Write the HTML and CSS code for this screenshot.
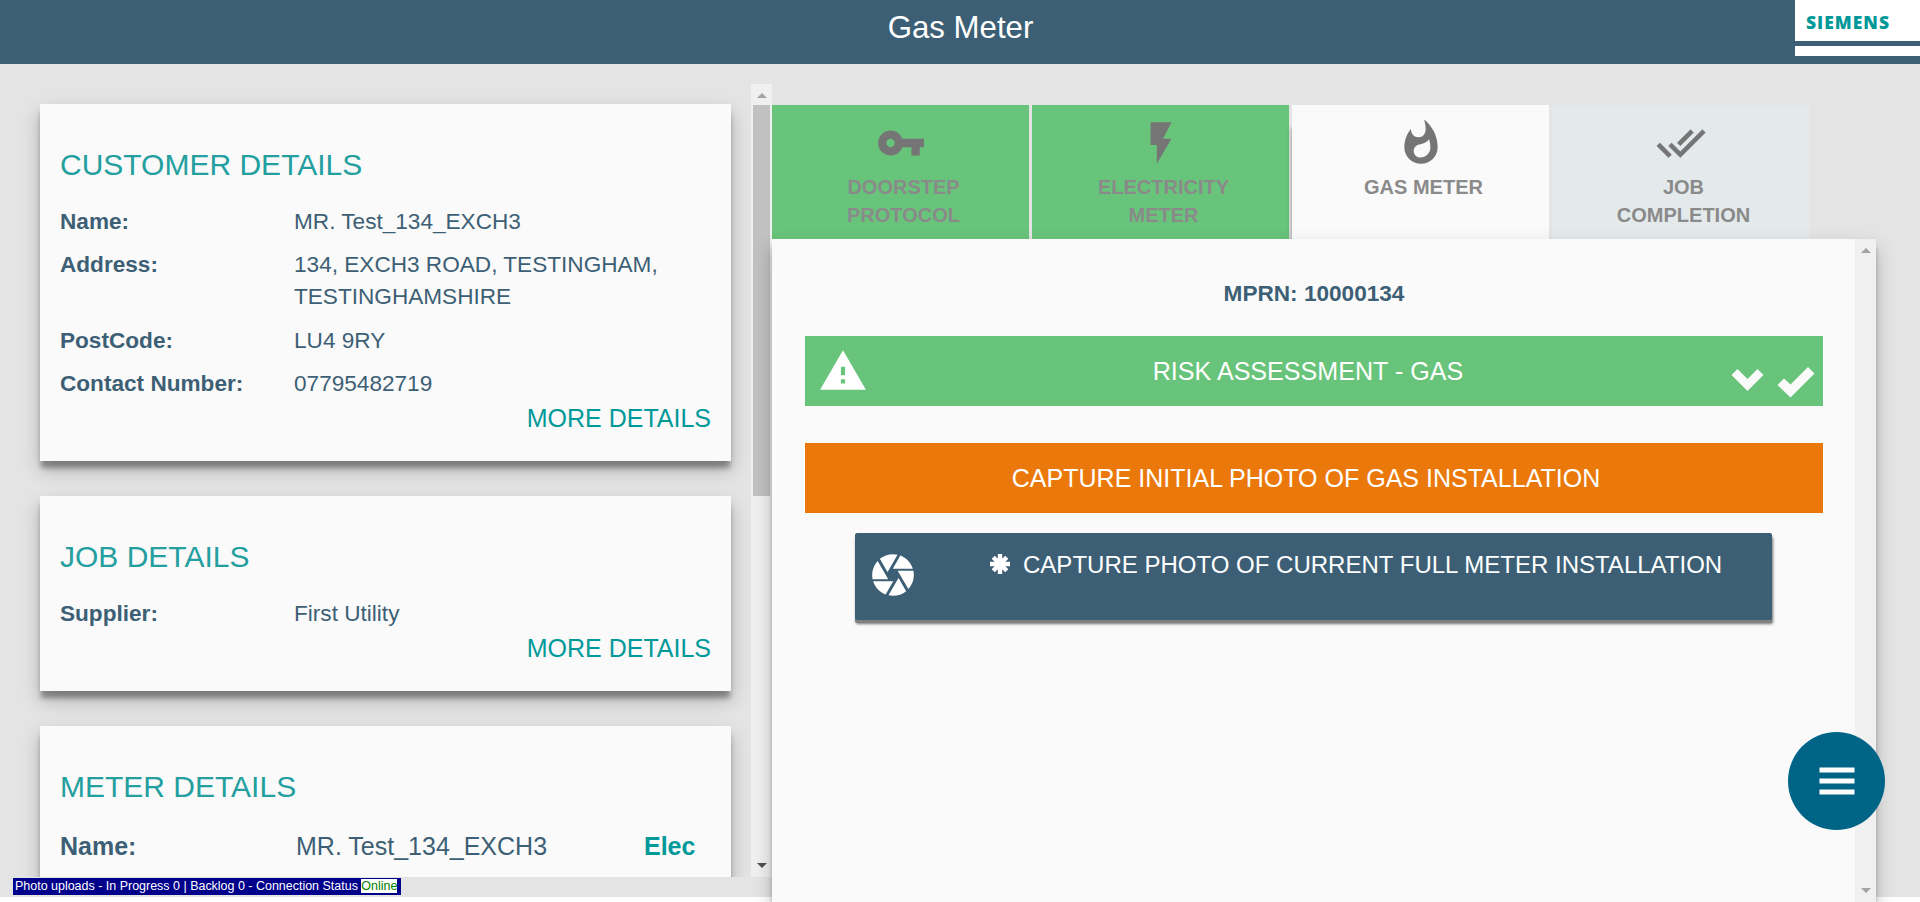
FILE: index.html
```html
<!DOCTYPE html>
<html lang="en">
<head>
<meta charset="utf-8">
<title>Gas Meter</title>
<link rel="stylesheet" href="styles.css">
</head>
<body>
<div class="app">
  <header class="header">
    <h1 class="title">Gas Meter</h1>
    <div class="brand"><div class="brand-name">SIEMENS</div><div class="brand-stripe"></div></div>
  </header>
  <main class="main">
    <div class="side">
      <div class="side-scroll">
        <div class="cards">
          <section class="card">
            <h2 class="card-title">CUSTOMER DETAILS</h2>
            <dl class="rows">
              <dt>Name:</dt><dd>MR. Test_134_EXCH3</dd>
              <dt>Address:</dt><dd>134, EXCH3 ROAD, TESTINGHAM, TESTINGHAMSHIRE</dd>
              <dt>PostCode:</dt><dd>LU4 9RY</dd>
              <dt>Contact Number:</dt><dd>07795482719</dd>
            </dl>
            <a class="more">MORE DETAILS</a>
          </section>
          <section class="card">
            <h2 class="card-title">JOB DETAILS</h2>
            <dl class="rows"><dt>Supplier:</dt><dd>First Utility</dd></dl>
            <a class="more">MORE DETAILS</a>
          </section>
          <section class="card">
            <h2 class="card-title">METER DETAILS</h2>
            <div class="meter-row"><b>Name:</b><span>MR. Test_134_EXCH3</span><b class="elec">Elec</b></div>
          </section>
        </div>
        <div class="scrollbar">
          <span class="arrow up"></span>
          <span class="thumb"></span>
          <span class="arrow down dark"></span>
        </div>
      </div>
      <div class="status">Photo uploads - In Progress 0 | Backlog 0 - Connection Status <span class="online">Online</span></div>
    </div>
    <div class="work">
      <nav class="tabs">
        <div class="tab done">
          <svg class="tab-icon" viewBox="0 0 24 24"><path d="M12.65 10C11.83 7.67 9.61 6 7 6c-3.31 0-6 2.69-6 6s2.69 6 6 6c2.61 0 4.83-1.67 5.65-4H17v4h4v-4h2v-4H12.65zM7 14c-1.1 0-2-.9-2-2s.9-2 2-2 2 .9 2 2-.9 2-2 2z"/></svg>
          <span class="tab-label">DOORSTEP<br>PROTOCOL</span>
        </div>
        <div class="tab done">
          <svg class="tab-icon" viewBox="0 0 24 24"><path d="M7 2v11h3v9l7-12h-4l4-8z"/></svg>
          <span class="tab-label">ELECTRICITY<br>METER</span>
        </div>
        <div class="tab active">
          <svg class="tab-icon" viewBox="0 0 24 24"><path d="M13.5.67s.74 2.65.74 4.8c0 2.06-1.35 3.73-3.41 3.73-2.07 0-3.63-1.67-3.63-3.73l.03-.36C5.21 7.51 4 10.62 4 14c0 4.42 3.58 8 8 8s8-3.58 8-8C20 8.61 17.41 3.8 13.5.67zM11.71 19c-1.78 0-3.22-1.4-3.22-3.14 0-1.62 1.05-2.76 2.81-3.12 1.77-.36 3.6-1.21 4.62-2.58.39 1.29.59 2.65.59 4.04 0 2.65-2.15 4.8-4.8 4.8z"/></svg>
          <span class="tab-label">GAS METER</span>
        </div>
        <div class="tab">
          <svg class="tab-icon ticks" viewBox="0 0 24 24"><path d="M18 7l-1.41-1.41-6.34 6.34 1.41 1.41L18 7zm4.24-1.41L11.66 16.17 7.48 12l-1.41 1.41L11.66 19l12-12-1.42-1.41zM.41 13.41L6 19l1.41-1.41L1.83 12 .41 13.41z"/></svg>
          <span class="tab-label">JOB<br>COMPLETION</span>
        </div>
      </nav>
      <div class="panel">
        <div class="panel-body">
          <div class="mprn">MPRN: 10000134</div>
          <div class="bar risk">
            <svg class="warn" viewBox="0 0 24 24"><path d="M1 21h22L12 2 1 21zm12-3h-2v-2h2v2zm0-4h-2v-4h2v4z"/></svg>
            <span class="bar-text">RISK ASSESSMENT - GAS</span>
            <svg class="marks" viewBox="0 0 84 32"><path d="M0.500 8l6-6 10 10 10-10 6 6-16 16z"/><path d="M46.500 18l6.500-6.500 6.500 6L77 0l6.500 6.500-24 24z"/></svg>
          </div>
          <div class="bar photo"><span class="bar-text">CAPTURE INITIAL PHOTO OF GAS INSTALLATION</span></div>
          <div class="task">
            <svg class="aperture" viewBox="0 0 24 24"><path d="M9.400 10.500l4.770-8.260C13.470 2.090 12.750 2 12 2c-2.400 0-4.600.85-6.320 2.250l3.660 6.350.06-.1zM21.540 9c-.92-2.920-3.150-5.260-6-6.340L11.880 9h9.660zm.26 1h-7.490l.29.500 4.760 8.250C21 16.970 22 14.610 22 12c0-.69-.07-1.350-.2-2zM8.540 12l-3.900-6.750C3.010 7.030 2 9.390 2 12c0 .69.07 1.350.2 2h7.490l-1.150-2zm-6.080 3c.92 2.920 3.150 5.260 6 6.340L12.120 15H2.460zm11.270 0l-3.900 6.760c.7.150 1.420.24 2.170.24 2.400 0 4.600-.85 6.320-2.250l-3.660-6.350-.93 1.600z"/></svg>
            <div class="task-text">
              <svg class="star" viewBox="0 0 20 20"><path d="M10 0v20M0 10h20M3.200 3.200l13.600 13.600M16.800 3.200L3.200 16.800"/></svg>
              <span>CAPTURE PHOTO OF CURRENT FULL METER INSTALLATION</span>
            </div>
          </div>
        </div>
        <div class="scrollbar">
          <span class="arrow up"></span>
          <span class="arrow down"></span>
        </div>
      </div>
    </div>
  </main>
</div>
<div class="fab"><svg viewBox="0 0 36 28"><path d="M.5.500h35v5h-35zM.5 11.500h35v5h-35zM.5 22.500h35v5h-35z"/></svg></div>
</body>
</html>
```
FILE: styles.css
```css
* { box-sizing: border-box; }
body {
  margin: 0;
  height: 902px;
  overflow: hidden;
  background: #fff;
  color: #3d5f75;
  font-family: "Liberation Sans", Arial, sans-serif;
}
h1, h2, dl, dt, dd { margin: 0; }
.app { display: flex; flex-direction: column; height: 897px; background: #e4e4e4; }

/* header */
.header {
  display: grid;
  grid-template-columns: 125px 1fr 125px;
  flex: none;
  height: 64px;
  background: #3d5f75;
}
.title {
  grid-column: 2;
  padding-left: 1px;
  font-size: 31.2px;
  font-weight: 400;
  line-height: 56px;
  text-align: center;
  color: #fff;
}
.brand { height: 56px; background: #fff; }
.brand-name {
  height: 41px;
  padding-left: 11px;
  font: 800 17.5px/44px "Open Sans", sans-serif;
  letter-spacing: 1px;
  color: #099;
}
.brand-stripe { height: 5px; background: #3d5f75; }

/* left column */
.main { display: flex; height: 833px; }
.side { width: 772px; padding-top: 20px; }
.side-scroll { display: flex; height: 793px; overflow: hidden; }
.cards { width: 751px; padding: 20px 20px 0 40px; }
.card {
  height: 357px;
  margin-bottom: 35px;
  padding: 40px 20px 0;
  background: #fafafa;
  box-shadow: 0 8px 5px -1px rgba(0, 0, 0, .33), 0 9px 18px rgba(0, 0, 0, .23);
}
.card:nth-child(2) { height: 195px; }
.card-title { font-size: 30px; font-weight: 400; line-height: 42px; color: #239f9f; }
.rows {
  display: grid;
  grid-template-columns: 234px 1fr;
  row-gap: 11.6px;
  margin-top: 20px;
  font-size: 22.6px;
  line-height: 31.8px;
}
dt { font-weight: 700; }
.more { display: block; margin-top: 1px; font-size: 25px; line-height: 35px; text-align: right; color: #099; }
.meter-row {
  display: grid;
  grid-template-columns: 236px 348px 1fr;
  margin-top: 21px;
  font-size: 25px;
  line-height: 35px;
}
.elec { color: #099; }
.status {
  width: 388px;
  height: 17px;
  margin: 1px 0 0 13px;
  padding-left: 2px;
  background: #00008b;
  font-size: 12.48px;
  line-height: 15px;
  white-space: nowrap;
  color: #fff;
}
.online { display: inline-block; margin-top: 1px; height: 14px; line-height: 14px; background: #fff; color: green; }

/* scrollbars */
.scrollbar {
  display: flex;
  flex-direction: column;
  flex: none;
  align-items: center;
  width: 21px;
  background: #f0f0f0;
}
.arrow { border: 5px solid transparent; }
.up { margin-top: 4px; border-bottom-color: #a3a3a3; }
.down { margin: auto 0 4px; border-top-color: #a3a3a3; }
.dark { border-top-color: #505050; }
.thumb { width: 17px; height: 391px; margin-top: 7px; background: #c1c1c1; }

/* right column */
.work { width: 1104px; padding-top: 41px; }
.tabs { display: flex; gap: 3px; height: 134px; }
.tab {
  display: flex;
  flex-direction: column;
  align-items: center;
  width: 257px;
  padding-top: 13px;
  background: #e4eaec;
  color: #8a8a8a;
}
.done { background: #68c47a; }
.active { background: #fafafa; box-shadow: -3px 21px 4px -2px rgba(0, 0, 0, .28); }
.tab-icon { width: 50px; height: 50px; fill: #757575; }
.ticks { stroke: #757575; stroke-width: .3; }
.tab-label { margin-top: 5px; padding-left: 6px; font-size: 20px; font-weight: 700; line-height: 28px; text-align: center; }
.panel {
  position: relative;
  display: flex;
  height: 663px;
  background: #fafafa;
  box-shadow: 0 8px 5px -1px rgba(0, 0, 0, .33), 0 9px 18px rgba(0, 0, 0, .23);
}
.panel-body { width: 1083px; padding: 39px 32px 0 33px; }
.mprn { font-size: 22.6px; font-weight: 700; line-height: 32px; text-align: center; }
.bar {
  display: grid;
  grid-template-columns: 88px 1fr 100px;
  align-items: start;
  height: 70px;
  line-height: 70px;
  font-size: 25.1px;
  text-align: center;
  color: #fff;
}
.bar-text { grid-column: 2; }
.risk { margin-top: 26px; background: #68c47a; }
.photo { margin-top: 37px; background: #eb780a; grid-template-columns: 84px 1fr 100px; font-size: 25.03px; }
.warn { width: 50px; height: 50px; margin: 10px 0 0 13px; fill: #fff; }
.marks { width: 84px; height: 32px; margin: 31px 0 0 8px; fill: #fafafa; }
.task {
  display: flex;
  width: 917px;
  height: 87px;
  margin: 20px 0 0 50px;
  border-radius: 2px;
  background: #3d5f75;
  color: #fff;
  box-shadow: 0 3px 0 #808080, 1px 4px 3px rgba(0, 0, 0, .55);
}
.aperture { width: 50px; height: 50px; margin: 17px 0 0 13px; fill: #fff; }
.task-text { display: flex; gap: 13px; margin-left: 72px; padding-top: 15px; font-size: 24.03px; line-height: 34px; white-space: nowrap; }
.star { width: 20px; height: 20px; margin-top: 6px; stroke: #fff; stroke-width: 4.4; fill: none; }

/* floating menu button */
.fab {
  position: absolute;
  left: 1788px;
  top: 732px;
  display: flex;
  align-items: center;
  justify-content: center;
  width: 97px;
  height: 98px;
  border-radius: 50%;
  background: #006487;
}
.fab svg { width: 36px; height: 28px; fill: #fff; }
```
